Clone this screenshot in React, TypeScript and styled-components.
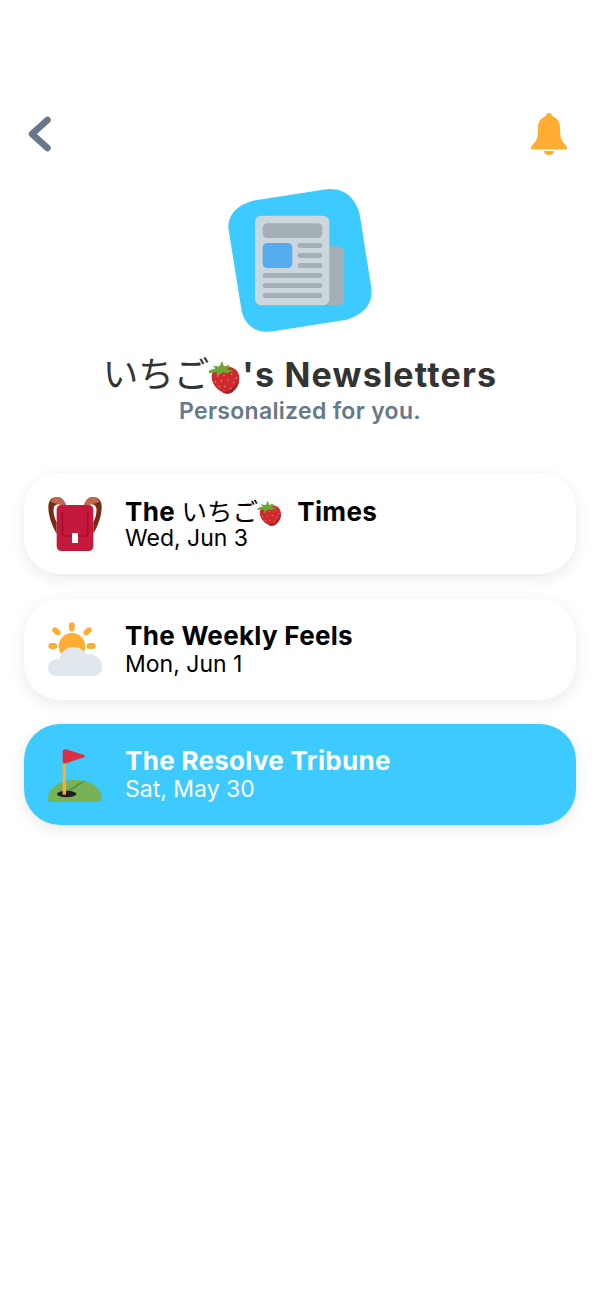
import styled, { createGlobalStyle } from "styled-components";

const GlobalStyle = createGlobalStyle`
  html, body {
    margin: 0;
    padding: 0;
    background: #fff;
  }
  body {
    font-family: Inter, "Noto Sans CJK JP", sans-serif;
  }
`;

const Page = styled.div`
  width: 600px;
  height: 1304px;
  box-sizing: border-box;
  padding-top: 113px;
  overflow: hidden;
`;

const Nav = styled.div`
  height: 42px;
  padding: 0 33px 0 28px;
  display: flex;
  justify-content: space-between;
  align-items: center;
`;

const Header = styled.div`
  margin-top: 33px;
  display: flex;
  flex-direction: column;
  align-items: center;
`;

const Logo = styled.svg`
  display: block;
  width: 144px;
  height: 145px;
`;

const Title = styled.h1`
  margin: 17px 0 0;
  height: 44px;
  line-height: 44px;
  font-size: 34px;
  font-weight: 700;
  letter-spacing: 1.2px;
  color: #333;
  white-space: nowrap;
`;

const Cjk = styled.span`
  font-family: "Noto Sans CJK JP", sans-serif;
  font-weight: 400;
  letter-spacing: 0;
`;

const TitleCjk = styled(Cjk)`
  font-size: 35.5px;
`;

const Subtitle = styled.div`
  height: 28px;
  line-height: 28px;
  margin-top: 3px;
  font-size: 23px;
  font-weight: 600;
  letter-spacing: 0.3px;
  color: #66788a;
`;

const List = styled.div`
  margin-top: 48px;
  padding: 0 24px;
  display: flex;
  flex-direction: column;
  gap: 24.6px;
`;

const Card = styled.div<{ $active?: boolean }>`
  height: 101px;
  box-sizing: border-box;
  padding-left: 24px;
  display: flex;
  align-items: center;
  gap: 24px;
  border-radius: 36px;
  background: ${(p) => (p.$active ? "#3dcaff" : "#fff")};
  color: ${(p) => (p.$active ? "#fff" : "#000")};
  box-shadow: 0 4px 16px rgba(0, 0, 0, 0.09);
`;

const CardIcon = styled.svg`
  flex: none;
  display: block;
  width: 54px;
  height: 54px;
`;

const CardText = styled.div`
  display: flex;
  flex-direction: column;
  margin-left: -1px;
`;

const CardTitle = styled.div`
  height: 27px;
  line-height: 27px;
  font-size: 26px;
  font-weight: 700;
  letter-spacing: 0.3px;
  white-space: nowrap;
`;

const CardCjk = styled(Cjk)`
  font-size: 25.5px;
`;

const CardDate = styled.div`
  height: 26px;
  line-height: 26px;
  margin-top: 2px;
  font-size: 23px;
  font-weight: 400;
  white-space: nowrap;
`;

const Berry = styled.svg<{ $size: number; $after: number }>`
  display: inline-block;
  width: ${(p) => p.$size}px;
  height: ${(p) => p.$size}px;
  margin-left: -1px;
  margin-right: ${(p) => p.$after}px;
  vertical-align: ${(p) => -p.$size * 0.2}px;
`;

function Strawberry({ size, after }: { size: number; after: number }) {
  return (
    <Berry $size={size} $after={after} viewBox="0 0 36 36">
      <path
        d="M4 16C5 10 11 7 18 7c8 0 14 3 15 10 1 8-3 15-9 18-3 1-6 1-9-1C8 31 3 23 4 16z"
        fill="#cf2a2f"
      />
      <path d="M24 35c-3 1-6 1-9-1 8 0 14-6 18-14 0 6-4 12-9 15z" fill="#ad1c25" />
      <path
        d="M1 11l7-2-3-3 7 1 3-6 2 6 6-2-2 5 6 1-7 3-4-1-6 4-1-4-8 1z"
        fill="#6fa63a"
      />
      <g fill="#f2b36b">
        <circle cx="10" cy="17" r="0.7" />
        <circle cx="17" cy="16" r="0.7" />
        <circle cx="25" cy="15" r="0.7" />
        <circle cx="30" cy="19" r="0.7" />
        <circle cx="8" cy="23" r="0.7" />
        <circle cx="14" cy="22" r="0.7" />
        <circle cx="21" cy="21" r="0.7" />
        <circle cx="27" cy="24" r="0.7" />
        <circle cx="12" cy="28" r="0.7" />
        <circle cx="18" cy="28" r="0.7" />
        <circle cx="24" cy="30" r="0.7" />
      </g>
    </Berry>
  );
}

function Backpack() {
  return (
    <CardIcon viewBox="12 12 162 162">
      <path
        d="M40 12C22 12 13 24 13 42c0 28 12 58 25 80V88C30 72 26 54 30 42c2-6 10-10 16-8 5 1 8 3 12 8h10C62 24 54 12 40 12z"
        fill="#7a2a14"
      />
      <path
        d="M146 12c18 0 27 12 27 30 0 28-12 58-25 80V88c8-16 12-34 8-46-2-6-10-10-16-8-5 1-8 3-12 8h-10c6-18 14-30 28-30z"
        fill="#7a2a14"
      />
      <path d="M20 26c4-9 12-14 20-14 14 0 22 12 28 30H58c-4-5-7-7-12-8-9-3-18-2-26-8z" fill="#c1694f" />
      <path d="M166 26c-4-9-12-14-20-14-14 0-22 12-28 30h10c4-5 7-7 12-8 9-3 18-2 26-8z" fill="#c1694f" />
      <rect x="38" y="36" width="110" height="138" rx="14" fill="#c4183c" />
      <path
        d="M55 56v64c0 6 4 9 9 9h58c5 0 9-3 9-9V56"
        fill="none"
        stroke="#a50f2d"
        strokeWidth="5"
      />
      <rect x="84" y="120" width="18" height="30" fill="#fff" />
    </CardIcon>
  );
}

function SunCloud() {
  return (
    <CardIcon viewBox="113 95 162 162">
      <g fill="#ffac33">
        <rect x="176" y="96" width="17" height="27" rx="8.5" />
        <rect x="114" y="158" width="27" height="18" rx="9" />
        <rect x="229" y="158" width="27" height="18" rx="9" />
        <rect x="125" y="114" width="27" height="17" rx="8.5" transform="rotate(40 138 122)" />
        <rect x="218" y="114" width="27" height="17" rx="8.5" transform="rotate(-40 232 122)" />
        <circle cx="185" cy="168" r="40" />
      </g>
      <path
        d="M143 257c-16 0-30-8-30-25 0-15 12-25 28-25 5 0 6 0 7-4 4-20 24-34 42-33 20 1 32 12 36 22 18-4 49 6 49 38 0 18-12 27-28 27z"
        fill="#e1e8ed"
      />
    </CardIcon>
  );
}

function GolfFlag() {
  return (
    <CardIcon viewBox="113 95 162 162">
      <path
        d="M113 245C113 215 150 191 195 191 240 191 273 215 273 243 273 252 268 258 258 258H125C117 258 113 253 113 245z"
        fill="#77b255"
      />
      <path d="M170 222c18-6 30-25 60-28-22 8-36 24-54 32z" fill="#5c913b" />
      <ellipse cx="169" cy="233" rx="29" ry="9.5" fill="#231f20" />
      <rect x="157" y="130" width="10" height="105" fill="#ffac33" />
      <path
        d="M157 106c0-6 4-9 10-7l54 17c4 2 4 5 0 7l-54 18c-6 2-10 0-10-5z"
        fill="#dd2e44"
      />
    </CardIcon>
  );
}

export default function App() {
  return (
    <>
      <GlobalStyle />
      <Page>
        <Nav>
          <svg width="24" height="36" viewBox="0 0 24 36">
            <path
              d="M19.5 4L4 18l15.5 14"
              fill="none"
              stroke="#66788a"
              strokeWidth="6.5"
              strokeLinecap="round"
              strokeLinejoin="round"
            />
          </svg>
          <svg width="36" height="42" viewBox="0 0 36 42">
            <path
              d="M18 0c2 0 3 1.400 3 3 5 1.500 8 6 8 11 0 10 1 12 3 15 2 2.500 4 4 4 6 0 1-1 1.500-2 1.500H2C1 36.500 0 36 0 35c0-2 2-3.500 4-6 2-3 3-5 3-15 0-5 3-9.500 8-11 0-1.600 1-3 3-3z"
              fill="#ffac33"
            />
            <path d="M13 38h10c0 2.500-2 4-5 4s-5-1.500-5-4z" fill="#ffac33" />
          </svg>
        </Nav>
        <Header>
          <Logo viewBox="54 40 432 435">
            <path
              d="M55 160C55 115 85 90 130 78L340 45C400 35 440 70 450 125L484 340C490 390 460 420 410 435L190 470C135 478 105 450 95 410z"
              fill="#3dcaff"
            />
            <rect x="340" y="215" width="62" height="177" rx="20" fill="#a4b0b6" />
            <rect x="135" y="123" width="223" height="269" rx="18" fill="#ccd6dd" />
            <rect x="158" y="146" width="179" height="44" rx="14" fill="#a4b0b6" />
            <rect x="158" y="205" width="89" height="75" rx="14" fill="#55acee" />
            <rect x="263" y="205" width="74" height="15" rx="7.500" fill="#a4b0b6" />
            <rect x="263" y="235" width="74" height="15" rx="7.500" fill="#a4b0b6" />
            <rect x="263" y="265" width="74" height="15" rx="7.500" fill="#a4b0b6" />
            <rect x="158" y="295" width="179" height="15" rx="7.500" fill="#a4b0b6" />
            <rect x="158" y="325" width="179" height="15" rx="7.500" fill="#a4b0b6" />
            <rect x="158" y="355" width="179" height="15" rx="7.500" fill="#a4b0b6" />
          </Logo>
          <Title>
            <TitleCjk>いちご</TitleCjk>
            <Strawberry size={34} after={0} />
            's Newsletters
          </Title>
          <Subtitle>Personalized for you.</Subtitle>
        </Header>
        <List>
          <Card>
            <Backpack />
            <CardText>
              <CardTitle>
                The <CardCjk>いちご</CardCjk>
                <Strawberry size={26} after={8} /> Times
              </CardTitle>
              <CardDate>Wed, Jun 3</CardDate>
            </CardText>
          </Card>
          <Card>
            <SunCloud />
            <CardText>
              <CardTitle>The Weekly Feels</CardTitle>
              <CardDate>Mon, Jun 1</CardDate>
            </CardText>
          </Card>
          <Card $active>
            <GolfFlag />
            <CardText>
              <CardTitle>The Resolve Tribune</CardTitle>
              <CardDate>Sat, May 30</CardDate>
            </CardText>
          </Card>
        </List>
      </Page>
    </>
  );
}
